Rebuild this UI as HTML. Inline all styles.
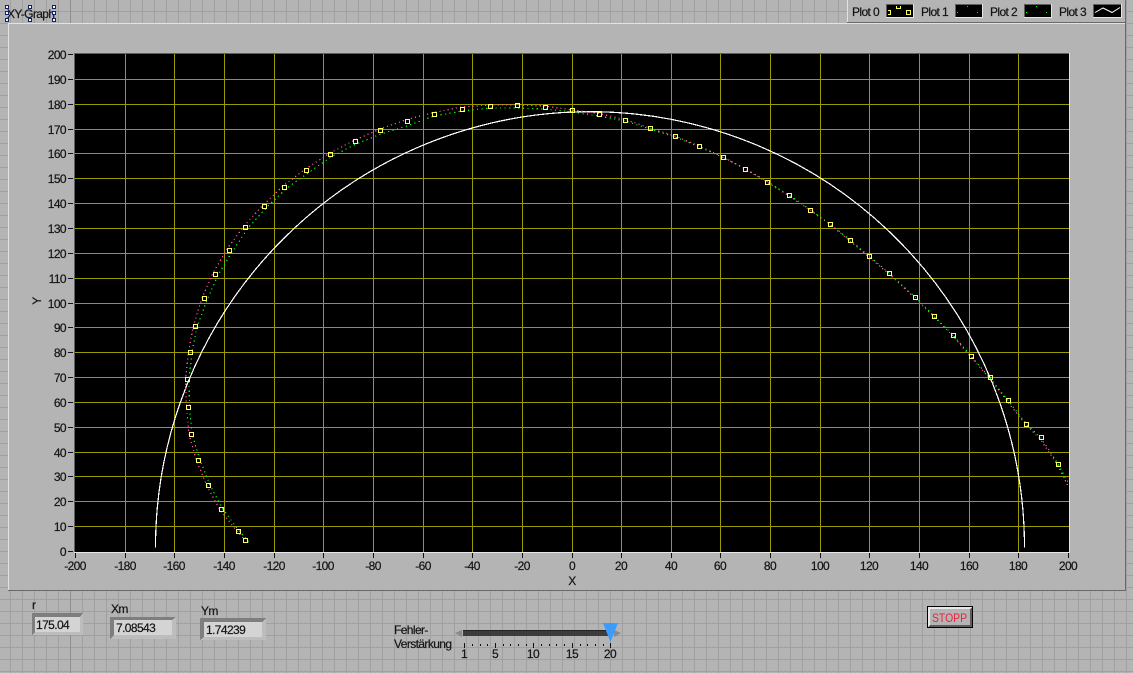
<!DOCTYPE html>
<html><head><meta charset="utf-8"><title>XY-Graph</title>
<style>
html,body{margin:0;padding:0;background:#b4b4b4;width:1133px;height:673px;overflow:hidden}
svg{display:block}
text{font-family:"Liberation Sans",sans-serif;font-size:12px;letter-spacing:-.6px;fill:#141414;stroke:#141414;stroke-width:.2px}
</style></head><body>
<svg width="1133" height="673" viewBox="0 0 1133 673" xmlns="http://www.w3.org/2000/svg">
<defs>
<pattern id="bg" width="12" height="12" patternUnits="userSpaceOnUse" x="10" y="11">
<rect width="12" height="12" fill="#b4b4b4"/>
<rect width="1" height="12" fill="#a0a0a0"/><rect width="12" height="1" fill="#a0a0a0"/>
</pattern>
<clipPath id="plot"><rect x="75" y="54" width="994" height="498"/></clipPath>
</defs>
<rect width="1133" height="673" fill="url(#bg)"/>
<rect x="70" y="0" width="1" height="673" fill="#8e8e8e"/>

<!-- graph panel -->
<rect x="8" y="23" width="1118" height="568" fill="#b4b4b4"/>
<path d="M8.5 591V23.5H1125" fill="none" stroke="#e2e2e2" shape-rendering="crispEdges"/>
<path d="M8 590.5H1125.5V23" fill="none" stroke="#696969" shape-rendering="crispEdges"/>

<!-- legend -->
<rect x="847" y="0" width="279" height="22" fill="#b4b4b4"/>
<path d="M847.5 22V0" stroke="#e2e2e2" fill="none" shape-rendering="crispEdges"/>
<path d="M847 22.5H1125.5V0" stroke="#696969" fill="none" shape-rendering="crispEdges"/>
<text x="852" y="16">Plot 0</text><text x="921" y="16">Plot 1</text><text x="990" y="16">Plot 2</text><text x="1059" y="16">Plot 3</text>
<g shape-rendering="crispEdges">
<rect x="886" y="4" width="28" height="14" fill="#000"/><path d="M886.5 18V4.500H914" stroke="#5e5e5e" fill="none"/><path d="M886 17.500H913.500V4" stroke="#e6e6e6" fill="none"/>
<rect x="955" y="4" width="28" height="14" fill="#000"/><path d="M955.5 18V4.500H983" stroke="#5e5e5e" fill="none"/><path d="M955 17.500H982.500V4" stroke="#e6e6e6" fill="none"/>
<rect x="1024" y="4" width="28" height="14" fill="#000"/><path d="M1024.5 18V4.500H1052" stroke="#5e5e5e" fill="none"/><path d="M1024 17.500H1051.500V4" stroke="#e6e6e6" fill="none"/>
<rect x="1093" y="4" width="29" height="14" fill="#000"/><path d="M1093.5 18V4.500H1122" stroke="#5e5e5e" fill="none"/><path d="M1093 17.500H1121.500V4" stroke="#e6e6e6" fill="none"/>
<path d="M888 10.500H890.500V14.500H888M896.500 6V8.500H900.500V6M906.500 10.500H910.500V14.500H906.500Z" stroke="#ffff66" fill="none"/>
<path d="M957 12h1v1h-1zM967 6h1v1h-1zM977 12h1v1h-1z" fill="#ff4f9f"/>
<path d="M1026 12h1v1h-1zM1036 6h1v1h-1zM1046 12h1v1h-1z" fill="#00ff00"/>
</g>
<path d="M1095 12.500L1103 8 1112 12.500 1120 7.500" stroke="#fff" fill="none"/>

<!-- label with selection handles -->
<text x="7" y="18">XY-Graph</text>
<g fill="#fff" stroke="#10206a" shape-rendering="crispEdges">
<rect x="5.500" y="5.500" width="3" height="3"/><rect x="28.500" y="5.500" width="3" height="3"/><rect x="52.500" y="5.500" width="3" height="3"/>
<rect x="5.500" y="11.500" width="3" height="3"/><rect x="52.500" y="11.500" width="3" height="3"/>
<rect x="5.500" y="18.500" width="3" height="3"/><rect x="28.500" y="18.500" width="3" height="3"/><rect x="52.500" y="18.500" width="3" height="3"/>
</g>

<!-- plot -->
<rect x="75" y="54" width="994" height="498" fill="#000"/>
<g shape-rendering="crispEdges" fill="none">
<path d="M74.500 553V53.500H1069" stroke="#5f5f5f"/>
<path d="M74 552.500H1069.500V53" stroke="#e6e6e6"/>
<path stroke="#999900" d="M125.500 54V552M174.500 54V552M224.500 54V552M274.500 54V552M323.500 54V552M373.500 54V552M423.500 54V552M472.500 54V552M522.500 54V552M572.500 54V552M621.500 54V552M671.500 54V552M720.500 54V552M770.500 54V552M820.500 54V552M869.500 54V552M919.500 54V552M969.500 54V552M1018.500 54V552
M75 79.500H1069M75 104.500H1069M75 129.500H1069M75 153.500H1069M75 178.500H1069M75 203.500H1069M75 228.500H1069M75 253.500H1069M75 278.500H1069M75 303.500H1069M75 327.500H1069M75 352.500H1069M75 377.500H1069M75 402.500H1069M75 427.500H1069M75 452.500H1069M75 476.500H1069M75 501.500H1069M75 526.500H1069"/>
<path stroke="#111" d="M68 54.500H73M68 79.500H73M68 104.500H73M68 129.500H73M68 153.500H73M68 178.500H73M68 203.500H73M68 228.500H73M68 253.500H73M68 278.500H73M68 303.500H73M68 327.500H73M68 352.500H73M68 377.500H73M68 402.500H73M68 427.500H73M68 452.500H73M68 476.500H73M68 501.500H73M68 526.500H73M68 551.500H73
M75.500 553V558M125.500 553V558M174.500 553V558M224.500 553V558M274.500 553V558M323.500 553V558M373.500 553V558M423.500 553V558M472.500 553V558M522.500 553V558M572.500 553V558M621.500 553V558M671.500 553V558M720.500 553V558M770.500 553V558M820.500 553V558M869.500 553V558M919.500 553V558M969.500 553V558M1018.500 553V558M1068.500 553V558"/>
</g>
<g clip-path="url(#plot)">
<path d="M155.500 547.700A434.500 436 0 0 1 1024.500 547.700" fill="none" stroke="#fff" stroke-width="1.200" shape-rendering="crispEdges"/>
<polyline fill="none" stroke="#ff4f9f" stroke-width="1.200" stroke-dasharray="1.200 3" shape-rendering="crispEdges" points="243,538 236,530 220,510 207,486 196.500,460.500 189,434 186.500,407 185.500,379 188.500,352 193.500,325.500 202,298 213,273 227,249 244,226 263,205 283,186 305.500,169 330,153 355,140 380,129 407,119.500 434,112.500 462,107 490,105 517,105 545,106 572,110 599,113.500 625,119.500 650,128 675,136 699,146 723,157 745,169 767,182 789,196 810,210 830,224.500 850,241 869,257 889,274 915,298 934,317 953,336 971,357 990,379 1008,402 1026,425 1041,440 1058,466 1068,486"/>
<polyline fill="none" stroke="#00ff00" stroke-width="1.200" stroke-dasharray="1.200 3.400" shape-rendering="crispEdges" points="248.600,542 238.500,530 222,508 210,485 200,460 192,434 189.500,407 189,379 192,352 197,327 207,300 218,275 232,252 248,228 267,207 287,188 308,173 331,157 356,144 381,134 407,126 434,116 462,111 490,108 517,108 545,109 572,112 599,116 625,121 650,129 675,137 699,146.500 723,157.500 745,168.500 767,181.500 789,195 810,209.500 830,224 850,240 869,256 889,273 915,297 934,316 953,335 971,356 990,378 1008,400.500 1026,423.500 1041,438 1058,464 1069,484"/>
<g fill="none" stroke="#ffff66" shape-rendering="crispEdges">
<rect x="243.500" y="538.500" width="4" height="4"/><rect x="236.500" y="529.500" width="4" height="4"/><rect x="219.500" y="507.500" width="4" height="4"/><rect x="206.500" y="483.500" width="4" height="4"/><rect x="196.500" y="458.500" width="4" height="4"/><rect x="189.500" y="432.500" width="4" height="4"/><rect x="186.500" y="405.500" width="4" height="4"/><rect x="185.500" y="377.500" width="4" height="4"/><rect x="188.500" y="350.500" width="4" height="4"/><rect x="193.500" y="324.500" width="4" height="4"/><rect x="202.500" y="296.500" width="4" height="4"/><rect x="213.500" y="272.500" width="4" height="4"/><rect x="227.500" y="248.500" width="4" height="4"/><rect x="243.500" y="225.500" width="4" height="4"/><rect x="262.500" y="204.500" width="4" height="4"/><rect x="282.500" y="185.500" width="4" height="4"/><rect x="304.500" y="168.500" width="4" height="4"/><rect x="328.500" y="152.500" width="4" height="4"/><rect x="353.500" y="139.500" width="4" height="4"/><rect x="378.500" y="128.500" width="4" height="4"/><rect x="405.500" y="119.500" width="4" height="4"/><rect x="432.500" y="112.500" width="4" height="4"/><rect x="460.500" y="107.500" width="4" height="4"/><rect x="488.500" y="104.500" width="4" height="4"/><rect x="515.500" y="103.500" width="4" height="4"/><rect x="543.500" y="105.500" width="4" height="4"/><rect x="570.500" y="108.500" width="4" height="4"/><rect x="597.500" y="112.500" width="4" height="4"/><rect x="623.500" y="118.500" width="4" height="4"/><rect x="648.500" y="126.500" width="4" height="4"/><rect x="673.500" y="134.500" width="4" height="4"/><rect x="697.500" y="144.500" width="4" height="4"/><rect x="721.500" y="155.500" width="4" height="4"/><rect x="743.500" y="167.500" width="4" height="4"/><rect x="765.500" y="180.500" width="4" height="4"/><rect x="787.500" y="193.500" width="4" height="4"/><rect x="808.500" y="208.500" width="4" height="4"/><rect x="828.500" y="222.500" width="4" height="4"/><rect x="848.500" y="238.500" width="4" height="4"/><rect x="867.500" y="254.500" width="4" height="4"/><rect x="887.500" y="271.500" width="4" height="4"/><rect x="913.500" y="295.500" width="4" height="4"/><rect x="932.500" y="314.500" width="4" height="4"/><rect x="951.500" y="333.500" width="4" height="4"/><rect x="969.500" y="354.500" width="4" height="4"/><rect x="988.500" y="375.500" width="4" height="4"/><rect x="1006.500" y="398.500" width="4" height="4"/><rect x="1024.500" y="422.500" width="4" height="4"/><rect x="1039.500" y="435.500" width="4" height="4"/><rect x="1056.500" y="462.500" width="4" height="4"/>
</g>
</g>

<!-- y labels -->
<g text-anchor="end">
<text x="66" y="59">200</text><text x="66" y="84">190</text><text x="66" y="109">180</text><text x="66" y="134">170</text><text x="66" y="158">160</text><text x="66" y="183">150</text><text x="66" y="208">140</text><text x="66" y="233">130</text><text x="66" y="258">120</text><text x="66" y="283">110</text><text x="66" y="308">100</text><text x="66" y="332">90</text><text x="66" y="357">80</text><text x="66" y="382">70</text><text x="66" y="407">60</text><text x="66" y="432">50</text><text x="66" y="457">40</text><text x="66" y="481">30</text><text x="66" y="506">20</text><text x="66" y="531">10</text><text x="66" y="556">0</text>
</g>
<!-- x labels -->
<g text-anchor="middle">
<text x="75" y="570">-200</text><text x="125" y="570">-180</text><text x="174" y="570">-160</text><text x="224" y="570">-140</text><text x="274" y="570">-120</text><text x="323" y="570">-100</text><text x="373" y="570">-80</text><text x="423" y="570">-60</text><text x="472" y="570">-40</text><text x="522" y="570">-20</text><text x="572" y="570">0</text><text x="621" y="570">20</text><text x="671" y="570">40</text><text x="720" y="570">60</text><text x="770" y="570">80</text><text x="820" y="570">100</text><text x="869" y="570">120</text><text x="919" y="570">140</text><text x="969" y="570">160</text><text x="1018" y="570">180</text><text x="1068" y="570">200</text>
<text x="572" y="585">X</text>
<text transform="translate(41,301) rotate(-90)">Y</text>
</g>

<!-- indicators -->
<text x="32" y="609">r</text><text x="111" y="613">Xm</text><text x="201" y="615">Ym</text>
<g shape-rendering="crispEdges">
<rect x="32" y="613" width="51" height="22" fill="#bdbdbd"/><path d="M32 635V613H83L80 617H35V632Z" fill="#7e7e7e"/><rect x="35" y="617" width="45" height="15" fill="#d4d4d4"/>
<rect x="110" y="617" width="66" height="22" fill="#bdbdbd"/><path d="M110 639V617H176L172 620H114V635Z" fill="#7e7e7e"/><rect x="114" y="620" width="58" height="15" fill="#d4d4d4"/>
<rect x="200" y="618" width="66" height="22" fill="#bdbdbd"/><path d="M200 640V618H266L262 622H204V637Z" fill="#7e7e7e"/><rect x="204" y="622" width="58" height="15" fill="#d4d4d4"/>
</g>
<text x="36" y="629">175.04</text><text x="116" y="632">7.08543</text><text x="206" y="634">1.74239</text>

<!-- slider -->
<text x="394" y="634">Fehler-</text><text x="394" y="648">Verstärkung</text>
<path d="M455 633L462 630V637Z" fill="#8a8a8a"/>
<path d="M621 633L614 630V637Z" fill="#8a8a8a"/>
<rect x="463" y="630" width="147" height="6" fill="#3c3c3c"/>
<rect x="463" y="630" width="147" height="1" fill="#222"/>
<path stroke="#111" fill="none" shape-rendering="crispEdges" d="M464.500 643V648M472.500 644V646M480.500 644V646M487.500 644V646M495.500 643V648M503.500 644V646M510.500 644V646M518.500 644V646M526.500 644V646M533.500 643V648M541.500 644V646M549.500 644V646M556.500 644V646M564.500 644V646M572.500 643V648M580.500 644V646M587.500 644V646M595.500 644V646M603.500 644V646M610.500 643V648"/>
<path d="M603 623H618L610.500 642Z" fill="#3b9bff"/>
<g text-anchor="middle"><text x="464" y="658">1</text><text x="495" y="658">5</text><text x="533" y="658">10</text><text x="572" y="658">15</text><text x="610" y="658">20</text></g>

<!-- stop button -->
<g shape-rendering="crispEdges">
<rect x="927" y="606" width="46" height="22" fill="#000"/>
<rect x="928" y="607" width="44" height="20" fill="#5c5c5c"/>
<path d="M928 627V607H972L970 609H930V625Z" fill="#e8e8e8"/>
<rect x="930" y="609" width="40" height="16" fill="#b4b4b4"/>
</g>
<text x="932" y="622" textLength="35" lengthAdjust="spacingAndGlyphs" style="fill:#f0203c;stroke:none;letter-spacing:0">STOPP</text>
</svg>
</body></html>
